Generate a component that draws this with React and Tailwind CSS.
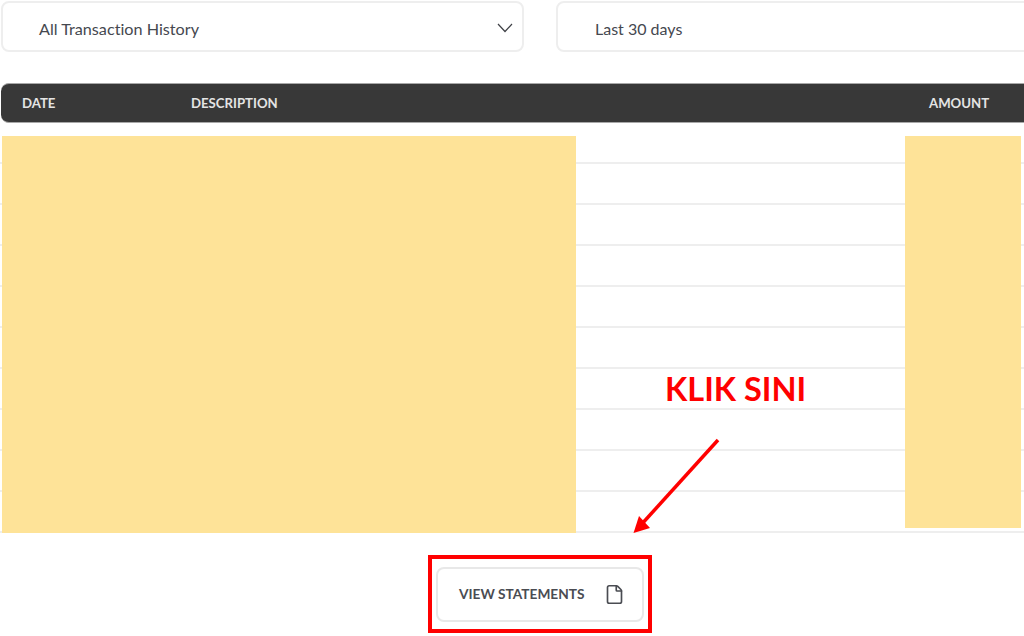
import { File } from 'lucide-react';

const rows = [0, 1, 2, 3, 4, 5, 6, 7, 8, 9];

export default function App() {
    return (
        <div className="relative w-[1024px] h-[636px] overflow-hidden bg-white font-['Lato',sans-serif] [font-variant-ligatures:none]">
            {/* FILTERS */}
            <div className="flex gap-[32px] pt-[1px] pl-[1px] w-[1500px]">
                <div className="w-[523px] h-[51px] flex items-center justify-between pl-[36px] pr-[9px] rounded-lg border-2 border-[#eeeeee] bg-white">
                    <span className="pt-[6px] text-[16.2px] text-[#45484f]">All Transaction History</span>
                    <svg width="16" height="10" viewBox="0 0 16 10" fill="none" stroke="#3f4146" strokeWidth="1.2" className="mt-[2px]">
                        <polyline points="1,1 8,8.5 15,1" />
                    </svg>
                </div>
                <div className="w-[523px] h-[51px] flex items-center pl-[37px] rounded-lg border-2 border-[#eeeeee] bg-white">
                    <span className="pt-[4px] text-[16px] text-[#45484f]">Last 30 days</span>
                </div>
            </div>

            {/* TABLE HEADER */}
            <div className="flex items-center ml-[1px] mt-[31px] pt-[1px] w-[1200px] h-[40px] rounded-l-lg bg-[#383838] border-y border-[#a8a8a8] text-[13.2px] font-bold text-[#e4e4e4]">
                <span className="ml-[21px] w-[169px]">DATE</span>
                <span className="w-[738px]">DESCRIPTION</span>
                <span>AMOUNT</span>
            </div>

            {/* ROWS */}
            <div className="flex flex-col">
                {rows.map((row) => (
                    <div key={row} className="h-[41px] border-b-2 border-[#eeeeee]" />
                ))}
            </div>

            {/* REDACTED BLOCKS */}
            <div className="absolute left-[2px] top-[136px] w-[574px] h-[397px] bg-[#fee398]" />
            <div className="absolute left-[905px] top-[136px] w-[116px] h-[392px] bg-[#fee398]" />

            {/* BUTTON */}
            <div className="flex justify-center mt-[22px] pl-[56px]">
                <div className="border-4 border-[#ff0000] w-[224px] h-[78px] flex items-center justify-center">
                    <button className="w-[208px] h-[55px] flex items-center gap-[19px] pl-[21px] rounded-lg border-2 border-[#e8e8e8] bg-white text-[13.7px] font-bold text-[#4a4c52]">
                        VIEW STATEMENTS
                        <File size={21} strokeWidth={1.9} className="text-[#4a4c52]" />
                    </button>
                </div>
            </div>

            {/* ANNOTATION */}
            <span className="absolute left-[665px] top-[369px] text-[32.5px] leading-[40px] font-bold text-[#ff0000]">KLIK SINI</span>
            <svg className="absolute left-[620px] top-[430px]" width="110" height="110" viewBox="620 430 110 110" fill="none">
                <line x1="718" y1="440" x2="640" y2="526" stroke="#ff0000" strokeWidth="3.5" />
                <polygon points="633.5,533 639,516 650,528" fill="#ff0000" />
            </svg>
        </div>
    );
}
